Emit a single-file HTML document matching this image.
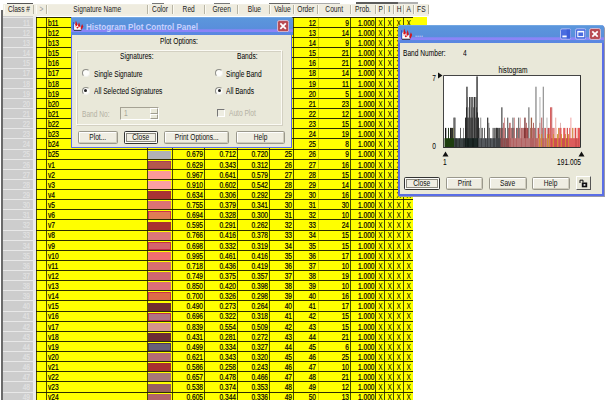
<!DOCTYPE html>
<html><head><meta charset="utf-8"><title>Signature Editor</title>
<style>
html,body{margin:0;padding:0;background:#fff;}
body{width:609px;height:405px;position:relative;overflow:hidden;font-family:"Liberation Sans",sans-serif;font-size:7.5px;color:#000;}
.a{position:absolute;}
.t{position:absolute;white-space:nowrap;line-height:10px;height:10px;font-size:8.4px;transform:scaleX(0.79);transform-origin:0 50%;}
.t.r{transform-origin:100% 50%;}
.t.c{transform-origin:50% 50%;}
.s{display:inline-block;font-size:8.4px;transform:scaleX(0.79);transform-origin:50% 50%;white-space:nowrap;}
.k{-webkit-text-stroke:0.2px currentColor;}
.r{text-align:right;}
.c{text-align:center;}
.hd{position:absolute;top:5px;height:9px;background:#efecdf;border-right:1px solid #b8b5a5;border-left:1px solid #fbfaf3;line-height:9px;text-align:center;white-space:nowrap;font-size:7.5px;color:#222;}
.hl{position:absolute;height:1px;background:#2c2c00;}
.vl{position:absolute;width:1px;background:rgba(30,30,0,0.8);}
.btn{position:absolute;background:#efede2;border:1px solid #9a988c;border-radius:1.5px;box-shadow:inset -1px -1px 0 #cfccbd, inset 1px 1px 0 #fff;text-align:center;white-space:nowrap;font-size:7.5px;color:#111;box-sizing:border-box;}
.win{position:absolute;background:#e9e8d9;box-sizing:border-box;}
.tb{position:absolute;left:0;right:0;top:0;}
.radio{position:absolute;width:6px;height:6px;border-radius:50%;background:#fdfdfb;border:1px solid #f0f0ea;border-top-color:#8e8e88;border-left-color:#8e8e88;box-sizing:content-box;}
.dis{color:#b4b1a3;}
</style></head><body>

<div class="a" style="left:7px;top:3px;width:26px;height:1px;background:#555"></div>
<div class="a" style="left:152px;top:3px;width:12px;height:1px;background:#777"></div>
<div class="a" style="left:214px;top:3px;width:16px;height:1px;background:#777"></div>
<div class="a" style="left:269px;top:3px;width:25px;height:1px;background:#666"></div>
<div class="a" style="left:290px;top:2.6px;width:50px;height:1px;background:#aaa"></div>
<div class="a" style="left:356px;top:2.2px;width:42px;height:1.6px;background:#5c5c5c"></div>
<div class="a" style="left:398px;top:2.4px;width:20px;height:1.2px;background:#b0b0b0"></div>
<div class="a" style="left:3px;top:4px;width:426px;height:12px;background:#f1efe4"></div>
<div class="hd" style="left:4px;width:28px;"><span class="s">Class #</span></div>
<div class="hd" style="left:36px;width:9px;color:#999;"><span class="s">&gt;</span></div>
<div class="hd" style="left:47px;width:99px;"><span class="s">Signature Name</span></div>
<div class="hd" style="left:148px;width:23px;"><span class="s">Color</span></div>
<div class="hd" style="left:173px;width:30px;"><span class="s">Red</span></div>
<div class="hd" style="left:205px;width:31px;"><span class="s">Green</span></div>
<div class="hd" style="left:238px;width:30px;"><span class="s">Blue</span></div>
<div class="hd" style="left:270px;width:22px;"><span class="s">Value</span></div>
<div class="hd" style="left:294px;width:22px;"><span class="s">Order</span></div>
<div class="hd" style="left:318px;width:31px;"><span class="s">Count</span></div>
<div class="hd" style="left:351px;width:23px;"><span class="s">Prob.</span></div>
<div class="hd" style="left:376px;width:7px;"><span class="s">P</span></div>
<div class="hd" style="left:385px;width:7px;"><span class="s">I</span></div>
<div class="hd" style="left:394px;width:8px;"><span class="s">H</span></div>
<div class="hd" style="left:404px;width:8px;"><span class="s">A</span></div>
<div class="hd" style="left:414px;width:13px;"><span class="s">FS</span></div>
<div class="a" style="left:0.6px;top:10px;width:2px;height:390px;background:#6a6a6a"></div>
<div class="a" style="left:3px;top:16px;width:30px;height:384px;background:#cdcdcd"></div>
<div class="a" style="left:33px;top:16px;width:4px;height:384px;background:#ebebeb"></div>
<div class="a" style="left:36.3px;top:17.45px;width:376.7px;height:382.55px;background:#ffff00"></div>
<div class="a" style="left:413px;top:17.45px;width:13.6px;height:7.4px;background:#ffff00"></div>
<div class="a" style="left:3px;top:16.95px;width:30px;height:1px;background:#e8e8e8"></div>
<div class="hl" style="left:36.3px;top:16.95px;width:376.7px"></div>
<div class="t r k" style="left:3px;width:27px;top:17.85px;color:#e2e2e2">11</div>
<div class="t k" style="left:47.8px;top:17.85px">b11</div>
<div class="t r k" style="left:294px;width:22px;top:17.85px">12</div>
<div class="t r k" style="left:318px;width:31px;top:17.85px">9</div>
<div class="t r k" style="left:351px;width:23.5px;top:17.85px">1.000</div>
<div class="t c" style="left:376px;width:9px;top:17.85px">X</div>
<div class="t c" style="left:385px;width:9.399999999999977px;top:17.85px">X</div>
<div class="t c" style="left:394.4px;width:9.200000000000045px;top:17.85px">X</div>
<div class="t c" style="left:403.6px;width:9.399999999999977px;top:17.85px">X</div>
<div class="a" style="left:3px;top:27.07px;width:30px;height:1px;background:#e8e8e8"></div>
<div class="hl" style="left:36.3px;top:27.07px;width:376.7px"></div>
<div class="t r k" style="left:3px;width:27px;top:27.97px;color:#e2e2e2">12</div>
<div class="t k" style="left:47.8px;top:27.97px">b12</div>
<div class="t r k" style="left:294px;width:22px;top:27.97px">13</div>
<div class="t r k" style="left:318px;width:31px;top:27.97px">14</div>
<div class="t r k" style="left:351px;width:23.5px;top:27.97px">1.000</div>
<div class="t c" style="left:376px;width:9px;top:27.97px">X</div>
<div class="t c" style="left:385px;width:9.399999999999977px;top:27.97px">X</div>
<div class="t c" style="left:394.4px;width:9.200000000000045px;top:27.97px">X</div>
<div class="t c" style="left:403.6px;width:9.399999999999977px;top:27.97px">X</div>
<div class="a" style="left:3px;top:37.20px;width:30px;height:1px;background:#e8e8e8"></div>
<div class="hl" style="left:36.3px;top:37.20px;width:376.7px"></div>
<div class="t r k" style="left:3px;width:27px;top:38.10px;color:#e2e2e2">13</div>
<div class="t k" style="left:47.8px;top:38.10px">b13</div>
<div class="t r k" style="left:294px;width:22px;top:38.10px">14</div>
<div class="t r k" style="left:318px;width:31px;top:38.10px">9</div>
<div class="t r k" style="left:351px;width:23.5px;top:38.10px">1.000</div>
<div class="t c" style="left:376px;width:9px;top:38.10px">X</div>
<div class="t c" style="left:385px;width:9.399999999999977px;top:38.10px">X</div>
<div class="t c" style="left:394.4px;width:9.200000000000045px;top:38.10px">X</div>
<div class="t c" style="left:403.6px;width:9.399999999999977px;top:38.10px">X</div>
<div class="a" style="left:3px;top:47.33px;width:30px;height:1px;background:#e8e8e8"></div>
<div class="hl" style="left:36.3px;top:47.33px;width:376.7px"></div>
<div class="t r k" style="left:3px;width:27px;top:48.23px;color:#e2e2e2">14</div>
<div class="t k" style="left:47.8px;top:48.23px">b15</div>
<div class="t r k" style="left:294px;width:22px;top:48.23px">15</div>
<div class="t r k" style="left:318px;width:31px;top:48.23px">21</div>
<div class="t r k" style="left:351px;width:23.5px;top:48.23px">1.000</div>
<div class="t c" style="left:376px;width:9px;top:48.23px">X</div>
<div class="t c" style="left:385px;width:9.399999999999977px;top:48.23px">X</div>
<div class="t c" style="left:394.4px;width:9.200000000000045px;top:48.23px">X</div>
<div class="t c" style="left:403.6px;width:9.399999999999977px;top:48.23px">X</div>
<div class="a" style="left:3px;top:57.45px;width:30px;height:1px;background:#e8e8e8"></div>
<div class="hl" style="left:36.3px;top:57.45px;width:376.7px"></div>
<div class="t r k" style="left:3px;width:27px;top:58.35px;color:#e2e2e2">15</div>
<div class="t k" style="left:47.8px;top:58.35px">b16</div>
<div class="t r k" style="left:294px;width:22px;top:58.35px">16</div>
<div class="t r k" style="left:318px;width:31px;top:58.35px">21</div>
<div class="t r k" style="left:351px;width:23.5px;top:58.35px">1.000</div>
<div class="t c" style="left:376px;width:9px;top:58.35px">X</div>
<div class="t c" style="left:385px;width:9.399999999999977px;top:58.35px">X</div>
<div class="t c" style="left:394.4px;width:9.200000000000045px;top:58.35px">X</div>
<div class="t c" style="left:403.6px;width:9.399999999999977px;top:58.35px">X</div>
<div class="a" style="left:3px;top:67.58px;width:30px;height:1px;background:#e8e8e8"></div>
<div class="hl" style="left:36.3px;top:67.58px;width:376.7px"></div>
<div class="t r k" style="left:3px;width:27px;top:68.48px;color:#e2e2e2">17</div>
<div class="t k" style="left:47.8px;top:68.48px">b17</div>
<div class="t r k" style="left:294px;width:22px;top:68.48px">18</div>
<div class="t r k" style="left:318px;width:31px;top:68.48px">14</div>
<div class="t r k" style="left:351px;width:23.5px;top:68.48px">1.000</div>
<div class="t c" style="left:376px;width:9px;top:68.48px">X</div>
<div class="t c" style="left:385px;width:9.399999999999977px;top:68.48px">X</div>
<div class="t c" style="left:394.4px;width:9.200000000000045px;top:68.48px">X</div>
<div class="t c" style="left:403.6px;width:9.399999999999977px;top:68.48px">X</div>
<div class="a" style="left:3px;top:77.70px;width:30px;height:1px;background:#e8e8e8"></div>
<div class="hl" style="left:36.3px;top:77.70px;width:376.7px"></div>
<div class="t r k" style="left:3px;width:27px;top:78.60px;color:#e2e2e2">18</div>
<div class="t k" style="left:47.8px;top:78.60px">b18</div>
<div class="t r k" style="left:294px;width:22px;top:78.60px">19</div>
<div class="t r k" style="left:318px;width:31px;top:78.60px">11</div>
<div class="t r k" style="left:351px;width:23.5px;top:78.60px">1.000</div>
<div class="t c" style="left:376px;width:9px;top:78.60px">X</div>
<div class="t c" style="left:385px;width:9.399999999999977px;top:78.60px">X</div>
<div class="t c" style="left:394.4px;width:9.200000000000045px;top:78.60px">X</div>
<div class="t c" style="left:403.6px;width:9.399999999999977px;top:78.60px">X</div>
<div class="a" style="left:3px;top:87.83px;width:30px;height:1px;background:#e8e8e8"></div>
<div class="hl" style="left:36.3px;top:87.83px;width:376.7px"></div>
<div class="t r k" style="left:3px;width:27px;top:88.73px;color:#e2e2e2">19</div>
<div class="t k" style="left:47.8px;top:88.73px">b19</div>
<div class="t r k" style="left:294px;width:22px;top:88.73px">20</div>
<div class="t r k" style="left:318px;width:31px;top:88.73px">5</div>
<div class="t r k" style="left:351px;width:23.5px;top:88.73px">1.000</div>
<div class="t c" style="left:376px;width:9px;top:88.73px">X</div>
<div class="t c" style="left:385px;width:9.399999999999977px;top:88.73px">X</div>
<div class="t c" style="left:394.4px;width:9.200000000000045px;top:88.73px">X</div>
<div class="t c" style="left:403.6px;width:9.399999999999977px;top:88.73px">X</div>
<div class="a" style="left:3px;top:97.95px;width:30px;height:1px;background:#e8e8e8"></div>
<div class="hl" style="left:36.3px;top:97.95px;width:376.7px"></div>
<div class="t r k" style="left:3px;width:27px;top:98.85px;color:#e2e2e2">20</div>
<div class="t k" style="left:47.8px;top:98.85px">b20</div>
<div class="t r k" style="left:294px;width:22px;top:98.85px">21</div>
<div class="t r k" style="left:318px;width:31px;top:98.85px">23</div>
<div class="t r k" style="left:351px;width:23.5px;top:98.85px">1.000</div>
<div class="t c" style="left:376px;width:9px;top:98.85px">X</div>
<div class="t c" style="left:385px;width:9.399999999999977px;top:98.85px">X</div>
<div class="t c" style="left:394.4px;width:9.200000000000045px;top:98.85px">X</div>
<div class="t c" style="left:403.6px;width:9.399999999999977px;top:98.85px">X</div>
<div class="a" style="left:3px;top:108.08px;width:30px;height:1px;background:#e8e8e8"></div>
<div class="hl" style="left:36.3px;top:108.08px;width:376.7px"></div>
<div class="t r k" style="left:3px;width:27px;top:108.98px;color:#e2e2e2">21</div>
<div class="t k" style="left:47.8px;top:108.98px">b21</div>
<div class="t r k" style="left:294px;width:22px;top:108.98px">22</div>
<div class="t r k" style="left:318px;width:31px;top:108.98px">12</div>
<div class="t r k" style="left:351px;width:23.5px;top:108.98px">1.000</div>
<div class="t c" style="left:376px;width:9px;top:108.98px">X</div>
<div class="t c" style="left:385px;width:9.399999999999977px;top:108.98px">X</div>
<div class="t c" style="left:394.4px;width:9.200000000000045px;top:108.98px">X</div>
<div class="t c" style="left:403.6px;width:9.399999999999977px;top:108.98px">X</div>
<div class="a" style="left:3px;top:118.20px;width:30px;height:1px;background:#e8e8e8"></div>
<div class="hl" style="left:36.3px;top:118.20px;width:376.7px"></div>
<div class="t r k" style="left:3px;width:27px;top:119.10px;color:#e2e2e2">22</div>
<div class="t k" style="left:47.8px;top:119.10px">b22</div>
<div class="t r k" style="left:294px;width:22px;top:119.10px">23</div>
<div class="t r k" style="left:318px;width:31px;top:119.10px">15</div>
<div class="t r k" style="left:351px;width:23.5px;top:119.10px">1.000</div>
<div class="t c" style="left:376px;width:9px;top:119.10px">X</div>
<div class="t c" style="left:385px;width:9.399999999999977px;top:119.10px">X</div>
<div class="t c" style="left:394.4px;width:9.200000000000045px;top:119.10px">X</div>
<div class="t c" style="left:403.6px;width:9.399999999999977px;top:119.10px">X</div>
<div class="a" style="left:3px;top:128.32px;width:30px;height:1px;background:#e8e8e8"></div>
<div class="hl" style="left:36.3px;top:128.32px;width:376.7px"></div>
<div class="t r k" style="left:3px;width:27px;top:129.22px;color:#e2e2e2">23</div>
<div class="t k" style="left:47.8px;top:129.22px">b23</div>
<div class="t r k" style="left:294px;width:22px;top:129.22px">24</div>
<div class="t r k" style="left:318px;width:31px;top:129.22px">19</div>
<div class="t r k" style="left:351px;width:23.5px;top:129.22px">1.000</div>
<div class="t c" style="left:376px;width:9px;top:129.22px">X</div>
<div class="t c" style="left:385px;width:9.399999999999977px;top:129.22px">X</div>
<div class="t c" style="left:394.4px;width:9.200000000000045px;top:129.22px">X</div>
<div class="t c" style="left:403.6px;width:9.399999999999977px;top:129.22px">X</div>
<div class="a" style="left:3px;top:138.45px;width:30px;height:1px;background:#e8e8e8"></div>
<div class="hl" style="left:36.3px;top:138.45px;width:376.7px"></div>
<div class="t r k" style="left:3px;width:27px;top:139.35px;color:#e2e2e2">24</div>
<div class="t k" style="left:47.8px;top:139.35px">b24</div>
<div class="t r k" style="left:294px;width:22px;top:139.35px">25</div>
<div class="t r k" style="left:318px;width:31px;top:139.35px">8</div>
<div class="t r k" style="left:351px;width:23.5px;top:139.35px">1.000</div>
<div class="t c" style="left:376px;width:9px;top:139.35px">X</div>
<div class="t c" style="left:385px;width:9.399999999999977px;top:139.35px">X</div>
<div class="t c" style="left:394.4px;width:9.200000000000045px;top:139.35px">X</div>
<div class="t c" style="left:403.6px;width:9.399999999999977px;top:139.35px">X</div>
<div class="a" style="left:3px;top:148.57px;width:30px;height:1px;background:#e8e8e8"></div>
<div class="hl" style="left:36.3px;top:148.57px;width:376.7px"></div>
<div class="t r k" style="left:3px;width:27px;top:149.47px;color:#e2e2e2">25</div>
<div class="t k" style="left:47.8px;top:149.47px">b25</div>
<div class="a" style="left:148.3px;top:150.67px;width:22.7px;height:8.20px;background:#b2b2b6;"></div>
<div class="t r k" style="left:173px;width:30px;top:149.47px">0.679</div>
<div class="t r k" style="left:205px;width:31px;top:149.47px">0.712</div>
<div class="t r k" style="left:238px;width:30px;top:149.47px">0.720</div>
<div class="t r k" style="left:270px;width:22px;top:149.47px">25</div>
<div class="t r k" style="left:294px;width:22px;top:149.47px">26</div>
<div class="t r k" style="left:318px;width:31px;top:149.47px">9</div>
<div class="t r k" style="left:351px;width:23.5px;top:149.47px">1.000</div>
<div class="t c" style="left:376px;width:9px;top:149.47px">X</div>
<div class="t c" style="left:385px;width:9.399999999999977px;top:149.47px">X</div>
<div class="t c" style="left:394.4px;width:9.200000000000045px;top:149.47px">X</div>
<div class="t c" style="left:403.6px;width:9.399999999999977px;top:149.47px">X</div>
<div class="a" style="left:3px;top:158.70px;width:30px;height:1px;background:#e8e8e8"></div>
<div class="hl" style="left:36.3px;top:158.70px;width:376.7px"></div>
<div class="t r k" style="left:3px;width:27px;top:159.60px;color:#e2e2e2">26</div>
<div class="t k" style="left:47.8px;top:159.60px">v1</div>
<div class="a" style="left:148.3px;top:160.80px;width:22.7px;height:8.20px;background:#b4584c;box-shadow:inset 0 0 0 1px #a84058;"></div>
<div class="t r k" style="left:173px;width:30px;top:159.60px">0.629</div>
<div class="t r k" style="left:205px;width:31px;top:159.60px">0.343</div>
<div class="t r k" style="left:238px;width:30px;top:159.60px">0.312</div>
<div class="t r k" style="left:270px;width:22px;top:159.60px">26</div>
<div class="t r k" style="left:294px;width:22px;top:159.60px">27</div>
<div class="t r k" style="left:318px;width:31px;top:159.60px">16</div>
<div class="t r k" style="left:351px;width:23.5px;top:159.60px">1.000</div>
<div class="t c" style="left:376px;width:9px;top:159.60px">X</div>
<div class="t c" style="left:385px;width:9.399999999999977px;top:159.60px">X</div>
<div class="t c" style="left:394.4px;width:9.200000000000045px;top:159.60px">X</div>
<div class="t c" style="left:403.6px;width:9.399999999999977px;top:159.60px">X</div>
<div class="a" style="left:3px;top:168.82px;width:30px;height:1px;background:#e8e8e8"></div>
<div class="hl" style="left:36.3px;top:168.82px;width:376.7px"></div>
<div class="t r k" style="left:3px;width:27px;top:169.72px;color:#e2e2e2">27</div>
<div class="t k" style="left:47.8px;top:169.72px">v2</div>
<div class="a" style="left:148.3px;top:170.92px;width:22.7px;height:8.20px;background:#fc9a98;"></div>
<div class="t r k" style="left:173px;width:30px;top:169.72px">0.967</div>
<div class="t r k" style="left:205px;width:31px;top:169.72px">0.641</div>
<div class="t r k" style="left:238px;width:30px;top:169.72px">0.579</div>
<div class="t r k" style="left:270px;width:22px;top:169.72px">27</div>
<div class="t r k" style="left:294px;width:22px;top:169.72px">28</div>
<div class="t r k" style="left:318px;width:31px;top:169.72px">15</div>
<div class="t r k" style="left:351px;width:23.5px;top:169.72px">1.000</div>
<div class="t c" style="left:376px;width:9px;top:169.72px">X</div>
<div class="t c" style="left:385px;width:9.399999999999977px;top:169.72px">X</div>
<div class="t c" style="left:394.4px;width:9.200000000000045px;top:169.72px">X</div>
<div class="t c" style="left:403.6px;width:9.399999999999977px;top:169.72px">X</div>
<div class="a" style="left:3px;top:178.95px;width:30px;height:1px;background:#e8e8e8"></div>
<div class="hl" style="left:36.3px;top:178.95px;width:376.7px"></div>
<div class="t r k" style="left:3px;width:27px;top:179.85px;color:#e2e2e2">28</div>
<div class="t k" style="left:47.8px;top:179.85px">v3</div>
<div class="a" style="left:148.3px;top:181.05px;width:22.7px;height:8.20px;background:#fca0a0;"></div>
<div class="t r k" style="left:173px;width:30px;top:179.85px">0.910</div>
<div class="t r k" style="left:205px;width:31px;top:179.85px">0.602</div>
<div class="t r k" style="left:238px;width:30px;top:179.85px">0.542</div>
<div class="t r k" style="left:270px;width:22px;top:179.85px">28</div>
<div class="t r k" style="left:294px;width:22px;top:179.85px">29</div>
<div class="t r k" style="left:318px;width:31px;top:179.85px">14</div>
<div class="t r k" style="left:351px;width:23.5px;top:179.85px">1.000</div>
<div class="t c" style="left:376px;width:9px;top:179.85px">X</div>
<div class="t c" style="left:385px;width:9.399999999999977px;top:179.85px">X</div>
<div class="t c" style="left:394.4px;width:9.200000000000045px;top:179.85px">X</div>
<div class="t c" style="left:403.6px;width:9.399999999999977px;top:179.85px">X</div>
<div class="a" style="left:3px;top:189.07px;width:30px;height:1px;background:#e8e8e8"></div>
<div class="hl" style="left:36.3px;top:189.07px;width:376.7px"></div>
<div class="t r k" style="left:3px;width:27px;top:189.97px;color:#e2e2e2">29</div>
<div class="t k" style="left:47.8px;top:189.97px">v4</div>
<div class="a" style="left:148.3px;top:191.17px;width:22.7px;height:8.20px;background:#a83434;"></div>
<div class="t r k" style="left:173px;width:30px;top:189.97px">0.634</div>
<div class="t r k" style="left:205px;width:31px;top:189.97px">0.306</div>
<div class="t r k" style="left:238px;width:30px;top:189.97px">0.292</div>
<div class="t r k" style="left:270px;width:22px;top:189.97px">29</div>
<div class="t r k" style="left:294px;width:22px;top:189.97px">30</div>
<div class="t r k" style="left:318px;width:31px;top:189.97px">16</div>
<div class="t r k" style="left:351px;width:23.5px;top:189.97px">1.000</div>
<div class="t c" style="left:376px;width:9px;top:189.97px">X</div>
<div class="t c" style="left:385px;width:9.399999999999977px;top:189.97px">X</div>
<div class="t c" style="left:394.4px;width:9.200000000000045px;top:189.97px">X</div>
<div class="t c" style="left:403.6px;width:9.399999999999977px;top:189.97px">X</div>
<div class="a" style="left:3px;top:199.20px;width:30px;height:1px;background:#e8e8e8"></div>
<div class="hl" style="left:36.3px;top:199.20px;width:376.7px"></div>
<div class="t r k" style="left:3px;width:27px;top:200.10px;color:#e2e2e2">30</div>
<div class="t k" style="left:47.8px;top:200.10px">v5</div>
<div class="a" style="left:148.3px;top:201.30px;width:22.7px;height:8.20px;background:#dc7474;"></div>
<div class="t r k" style="left:173px;width:30px;top:200.10px">0.755</div>
<div class="t r k" style="left:205px;width:31px;top:200.10px">0.379</div>
<div class="t r k" style="left:238px;width:30px;top:200.10px">0.341</div>
<div class="t r k" style="left:270px;width:22px;top:200.10px">30</div>
<div class="t r k" style="left:294px;width:22px;top:200.10px">31</div>
<div class="t r k" style="left:318px;width:31px;top:200.10px">30</div>
<div class="t r k" style="left:351px;width:23.5px;top:200.10px">1.000</div>
<div class="t c" style="left:376px;width:9px;top:200.10px">X</div>
<div class="t c" style="left:385px;width:9.399999999999977px;top:200.10px">X</div>
<div class="t c" style="left:394.4px;width:9.200000000000045px;top:200.10px">X</div>
<div class="t c" style="left:403.6px;width:9.399999999999977px;top:200.10px">X</div>
<div class="a" style="left:3px;top:209.32px;width:30px;height:1px;background:#e8e8e8"></div>
<div class="hl" style="left:36.3px;top:209.32px;width:376.7px"></div>
<div class="t r k" style="left:3px;width:27px;top:210.22px;color:#e2e2e2">31</div>
<div class="t k" style="left:47.8px;top:210.22px">v6</div>
<div class="a" style="left:148.3px;top:211.42px;width:22.7px;height:8.20px;background:#e07c54;box-shadow:inset 0 0 0 1px #cc3050;"></div>
<div class="t r k" style="left:173px;width:30px;top:210.22px">0.694</div>
<div class="t r k" style="left:205px;width:31px;top:210.22px">0.328</div>
<div class="t r k" style="left:238px;width:30px;top:210.22px">0.300</div>
<div class="t r k" style="left:270px;width:22px;top:210.22px">31</div>
<div class="t r k" style="left:294px;width:22px;top:210.22px">32</div>
<div class="t r k" style="left:318px;width:31px;top:210.22px">10</div>
<div class="t r k" style="left:351px;width:23.5px;top:210.22px">1.000</div>
<div class="t c" style="left:376px;width:9px;top:210.22px">X</div>
<div class="t c" style="left:385px;width:9.399999999999977px;top:210.22px">X</div>
<div class="t c" style="left:394.4px;width:9.200000000000045px;top:210.22px">X</div>
<div class="t c" style="left:403.6px;width:9.399999999999977px;top:210.22px">X</div>
<div class="a" style="left:3px;top:219.45px;width:30px;height:1px;background:#e8e8e8"></div>
<div class="hl" style="left:36.3px;top:219.45px;width:376.7px"></div>
<div class="t r k" style="left:3px;width:27px;top:220.35px;color:#e2e2e2">32</div>
<div class="t k" style="left:47.8px;top:220.35px">v7</div>
<div class="a" style="left:148.3px;top:221.55px;width:22.7px;height:8.20px;background:#a83030;"></div>
<div class="t r k" style="left:173px;width:30px;top:220.35px">0.595</div>
<div class="t r k" style="left:205px;width:31px;top:220.35px">0.291</div>
<div class="t r k" style="left:238px;width:30px;top:220.35px">0.262</div>
<div class="t r k" style="left:270px;width:22px;top:220.35px">32</div>
<div class="t r k" style="left:294px;width:22px;top:220.35px">33</div>
<div class="t r k" style="left:318px;width:31px;top:220.35px">24</div>
<div class="t r k" style="left:351px;width:23.5px;top:220.35px">1.000</div>
<div class="t c" style="left:376px;width:9px;top:220.35px">X</div>
<div class="t c" style="left:385px;width:9.399999999999977px;top:220.35px">X</div>
<div class="t c" style="left:394.4px;width:9.200000000000045px;top:220.35px">X</div>
<div class="t c" style="left:403.6px;width:9.399999999999977px;top:220.35px">X</div>
<div class="a" style="left:3px;top:229.57px;width:30px;height:1px;background:#e8e8e8"></div>
<div class="hl" style="left:36.3px;top:229.57px;width:376.7px"></div>
<div class="t r k" style="left:3px;width:27px;top:230.47px;color:#e2e2e2">33</div>
<div class="t k" style="left:47.8px;top:230.47px">v8</div>
<div class="a" style="left:148.3px;top:231.67px;width:22.7px;height:8.20px;background:#dc7878;"></div>
<div class="t r k" style="left:173px;width:30px;top:230.47px">0.766</div>
<div class="t r k" style="left:205px;width:31px;top:230.47px">0.416</div>
<div class="t r k" style="left:238px;width:30px;top:230.47px">0.378</div>
<div class="t r k" style="left:270px;width:22px;top:230.47px">33</div>
<div class="t r k" style="left:294px;width:22px;top:230.47px">34</div>
<div class="t r k" style="left:318px;width:31px;top:230.47px">15</div>
<div class="t r k" style="left:351px;width:23.5px;top:230.47px">1.000</div>
<div class="t c" style="left:376px;width:9px;top:230.47px">X</div>
<div class="t c" style="left:385px;width:9.399999999999977px;top:230.47px">X</div>
<div class="t c" style="left:394.4px;width:9.200000000000045px;top:230.47px">X</div>
<div class="t c" style="left:403.6px;width:9.399999999999977px;top:230.47px">X</div>
<div class="a" style="left:3px;top:239.70px;width:30px;height:1px;background:#e8e8e8"></div>
<div class="hl" style="left:36.3px;top:239.70px;width:376.7px"></div>
<div class="t r k" style="left:3px;width:27px;top:240.60px;color:#e2e2e2">34</div>
<div class="t k" style="left:47.8px;top:240.60px">v9</div>
<div class="a" style="left:148.3px;top:241.80px;width:22.7px;height:8.20px;background:#d4646c;box-shadow:inset 0 0 0 1px #c83048;"></div>
<div class="t r k" style="left:173px;width:30px;top:240.60px">0.698</div>
<div class="t r k" style="left:205px;width:31px;top:240.60px">0.332</div>
<div class="t r k" style="left:238px;width:30px;top:240.60px">0.319</div>
<div class="t r k" style="left:270px;width:22px;top:240.60px">34</div>
<div class="t r k" style="left:294px;width:22px;top:240.60px">35</div>
<div class="t r k" style="left:318px;width:31px;top:240.60px">15</div>
<div class="t r k" style="left:351px;width:23.5px;top:240.60px">1.000</div>
<div class="t c" style="left:376px;width:9px;top:240.60px">X</div>
<div class="t c" style="left:385px;width:9.399999999999977px;top:240.60px">X</div>
<div class="t c" style="left:394.4px;width:9.200000000000045px;top:240.60px">X</div>
<div class="t c" style="left:403.6px;width:9.399999999999977px;top:240.60px">X</div>
<div class="a" style="left:3px;top:249.82px;width:30px;height:1px;background:#e8e8e8"></div>
<div class="hl" style="left:36.3px;top:249.82px;width:376.7px"></div>
<div class="t r k" style="left:3px;width:27px;top:250.72px;color:#e2e2e2">35</div>
<div class="t k" style="left:47.8px;top:250.72px">v10</div>
<div class="a" style="left:148.3px;top:251.92px;width:22.7px;height:8.20px;background:#f07070;"></div>
<div class="t r k" style="left:173px;width:30px;top:250.72px">0.995</div>
<div class="t r k" style="left:205px;width:31px;top:250.72px">0.461</div>
<div class="t r k" style="left:238px;width:30px;top:250.72px">0.416</div>
<div class="t r k" style="left:270px;width:22px;top:250.72px">35</div>
<div class="t r k" style="left:294px;width:22px;top:250.72px">36</div>
<div class="t r k" style="left:318px;width:31px;top:250.72px">17</div>
<div class="t r k" style="left:351px;width:23.5px;top:250.72px">1.000</div>
<div class="t c" style="left:376px;width:9px;top:250.72px">X</div>
<div class="t c" style="left:385px;width:9.399999999999977px;top:250.72px">X</div>
<div class="t c" style="left:394.4px;width:9.200000000000045px;top:250.72px">X</div>
<div class="t c" style="left:403.6px;width:9.399999999999977px;top:250.72px">X</div>
<div class="a" style="left:3px;top:259.95px;width:30px;height:1px;background:#e8e8e8"></div>
<div class="hl" style="left:36.3px;top:259.95px;width:376.7px"></div>
<div class="t r k" style="left:3px;width:27px;top:260.85px;color:#e2e2e2">36</div>
<div class="t k" style="left:47.8px;top:260.85px">v11</div>
<div class="a" style="left:148.3px;top:262.05px;width:22.7px;height:8.20px;background:#d87070;"></div>
<div class="t r k" style="left:173px;width:30px;top:260.85px">0.718</div>
<div class="t r k" style="left:205px;width:31px;top:260.85px">0.436</div>
<div class="t r k" style="left:238px;width:30px;top:260.85px">0.419</div>
<div class="t r k" style="left:270px;width:22px;top:260.85px">36</div>
<div class="t r k" style="left:294px;width:22px;top:260.85px">37</div>
<div class="t r k" style="left:318px;width:31px;top:260.85px">10</div>
<div class="t r k" style="left:351px;width:23.5px;top:260.85px">1.000</div>
<div class="t c" style="left:376px;width:9px;top:260.85px">X</div>
<div class="t c" style="left:385px;width:9.399999999999977px;top:260.85px">X</div>
<div class="t c" style="left:394.4px;width:9.200000000000045px;top:260.85px">X</div>
<div class="t c" style="left:403.6px;width:9.399999999999977px;top:260.85px">X</div>
<div class="a" style="left:3px;top:270.07px;width:30px;height:1px;background:#e8e8e8"></div>
<div class="hl" style="left:36.3px;top:270.07px;width:376.7px"></div>
<div class="t r k" style="left:3px;width:27px;top:270.97px;color:#e2e2e2">37</div>
<div class="t k" style="left:47.8px;top:270.97px">v12</div>
<div class="a" style="left:148.3px;top:272.18px;width:22.7px;height:8.20px;background:#d06870;"></div>
<div class="t r k" style="left:173px;width:30px;top:270.97px">0.749</div>
<div class="t r k" style="left:205px;width:31px;top:270.97px">0.375</div>
<div class="t r k" style="left:238px;width:30px;top:270.97px">0.357</div>
<div class="t r k" style="left:270px;width:22px;top:270.97px">37</div>
<div class="t r k" style="left:294px;width:22px;top:270.97px">38</div>
<div class="t r k" style="left:318px;width:31px;top:270.97px">19</div>
<div class="t r k" style="left:351px;width:23.5px;top:270.97px">1.000</div>
<div class="t c" style="left:376px;width:9px;top:270.97px">X</div>
<div class="t c" style="left:385px;width:9.399999999999977px;top:270.97px">X</div>
<div class="t c" style="left:394.4px;width:9.200000000000045px;top:270.97px">X</div>
<div class="t c" style="left:403.6px;width:9.399999999999977px;top:270.97px">X</div>
<div class="a" style="left:3px;top:280.20px;width:30px;height:1px;background:#e8e8e8"></div>
<div class="hl" style="left:36.3px;top:280.20px;width:376.7px"></div>
<div class="t r k" style="left:3px;width:27px;top:281.10px;color:#e2e2e2">38</div>
<div class="t k" style="left:47.8px;top:281.10px">v13</div>
<div class="a" style="left:148.3px;top:282.30px;width:22.7px;height:8.20px;background:#dc7078;"></div>
<div class="t r k" style="left:173px;width:30px;top:281.10px">0.850</div>
<div class="t r k" style="left:205px;width:31px;top:281.10px">0.420</div>
<div class="t r k" style="left:238px;width:30px;top:281.10px">0.398</div>
<div class="t r k" style="left:270px;width:22px;top:281.10px">38</div>
<div class="t r k" style="left:294px;width:22px;top:281.10px">39</div>
<div class="t r k" style="left:318px;width:31px;top:281.10px">10</div>
<div class="t r k" style="left:351px;width:23.5px;top:281.10px">1.000</div>
<div class="t c" style="left:376px;width:9px;top:281.10px">X</div>
<div class="t c" style="left:385px;width:9.399999999999977px;top:281.10px">X</div>
<div class="t c" style="left:394.4px;width:9.200000000000045px;top:281.10px">X</div>
<div class="t c" style="left:403.6px;width:9.399999999999977px;top:281.10px">X</div>
<div class="a" style="left:3px;top:290.32px;width:30px;height:1px;background:#e8e8e8"></div>
<div class="hl" style="left:36.3px;top:290.32px;width:376.7px"></div>
<div class="t r k" style="left:3px;width:27px;top:291.22px;color:#e2e2e2">39</div>
<div class="t k" style="left:47.8px;top:291.22px">v14</div>
<div class="a" style="left:148.3px;top:292.43px;width:22.7px;height:8.20px;background:#dc6c48;box-shadow:inset 0 0 0 1px #cc3050;"></div>
<div class="t r k" style="left:173px;width:30px;top:291.22px">0.700</div>
<div class="t r k" style="left:205px;width:31px;top:291.22px">0.326</div>
<div class="t r k" style="left:238px;width:30px;top:291.22px">0.298</div>
<div class="t r k" style="left:270px;width:22px;top:291.22px">39</div>
<div class="t r k" style="left:294px;width:22px;top:291.22px">40</div>
<div class="t r k" style="left:318px;width:31px;top:291.22px">16</div>
<div class="t r k" style="left:351px;width:23.5px;top:291.22px">1.000</div>
<div class="t c" style="left:376px;width:9px;top:291.22px">X</div>
<div class="t c" style="left:385px;width:9.399999999999977px;top:291.22px">X</div>
<div class="t c" style="left:394.4px;width:9.200000000000045px;top:291.22px">X</div>
<div class="t c" style="left:403.6px;width:9.399999999999977px;top:291.22px">X</div>
<div class="a" style="left:3px;top:300.45px;width:30px;height:1px;background:#e8e8e8"></div>
<div class="hl" style="left:36.3px;top:300.45px;width:376.7px"></div>
<div class="t r k" style="left:3px;width:27px;top:301.35px;color:#e2e2e2">40</div>
<div class="t k" style="left:47.8px;top:301.35px">v15</div>
<div class="a" style="left:148.3px;top:302.55px;width:22.7px;height:8.20px;background:#702c30;"></div>
<div class="t r k" style="left:173px;width:30px;top:301.35px">0.490</div>
<div class="t r k" style="left:205px;width:31px;top:301.35px">0.273</div>
<div class="t r k" style="left:238px;width:30px;top:301.35px">0.264</div>
<div class="t r k" style="left:270px;width:22px;top:301.35px">40</div>
<div class="t r k" style="left:294px;width:22px;top:301.35px">41</div>
<div class="t r k" style="left:318px;width:31px;top:301.35px">17</div>
<div class="t r k" style="left:351px;width:23.5px;top:301.35px">1.000</div>
<div class="t c" style="left:376px;width:9px;top:301.35px">X</div>
<div class="t c" style="left:385px;width:9.399999999999977px;top:301.35px">X</div>
<div class="t c" style="left:394.4px;width:9.200000000000045px;top:301.35px">X</div>
<div class="t c" style="left:403.6px;width:9.399999999999977px;top:301.35px">X</div>
<div class="a" style="left:3px;top:310.57px;width:30px;height:1px;background:#e8e8e8"></div>
<div class="hl" style="left:36.3px;top:310.57px;width:376.7px"></div>
<div class="t r k" style="left:3px;width:27px;top:311.47px;color:#e2e2e2">41</div>
<div class="t k" style="left:47.8px;top:311.47px">v16</div>
<div class="a" style="left:148.3px;top:312.68px;width:22.7px;height:8.20px;background:#b07484;box-shadow:inset 0 0 0 1px #b83050;"></div>
<div class="t r k" style="left:173px;width:30px;top:311.47px">0.696</div>
<div class="t r k" style="left:205px;width:31px;top:311.47px">0.322</div>
<div class="t r k" style="left:238px;width:30px;top:311.47px">0.318</div>
<div class="t r k" style="left:270px;width:22px;top:311.47px">41</div>
<div class="t r k" style="left:294px;width:22px;top:311.47px">42</div>
<div class="t r k" style="left:318px;width:31px;top:311.47px">15</div>
<div class="t r k" style="left:351px;width:23.5px;top:311.47px">1.000</div>
<div class="t c" style="left:376px;width:9px;top:311.47px">X</div>
<div class="t c" style="left:385px;width:9.399999999999977px;top:311.47px">X</div>
<div class="t c" style="left:394.4px;width:9.200000000000045px;top:311.47px">X</div>
<div class="t c" style="left:403.6px;width:9.399999999999977px;top:311.47px">X</div>
<div class="a" style="left:3px;top:320.70px;width:30px;height:1px;background:#e8e8e8"></div>
<div class="hl" style="left:36.3px;top:320.70px;width:376.7px"></div>
<div class="t r k" style="left:3px;width:27px;top:321.60px;color:#e2e2e2">42</div>
<div class="t k" style="left:47.8px;top:321.60px">v17</div>
<div class="a" style="left:148.3px;top:322.80px;width:22.7px;height:8.20px;background:#d4948c;"></div>
<div class="t r k" style="left:173px;width:30px;top:321.60px">0.839</div>
<div class="t r k" style="left:205px;width:31px;top:321.60px">0.554</div>
<div class="t r k" style="left:238px;width:30px;top:321.60px">0.509</div>
<div class="t r k" style="left:270px;width:22px;top:321.60px">42</div>
<div class="t r k" style="left:294px;width:22px;top:321.60px">43</div>
<div class="t r k" style="left:318px;width:31px;top:321.60px">15</div>
<div class="t r k" style="left:351px;width:23.5px;top:321.60px">1.000</div>
<div class="t c" style="left:376px;width:9px;top:321.60px">X</div>
<div class="t c" style="left:385px;width:9.399999999999977px;top:321.60px">X</div>
<div class="t c" style="left:394.4px;width:9.200000000000045px;top:321.60px">X</div>
<div class="t c" style="left:403.6px;width:9.399999999999977px;top:321.60px">X</div>
<div class="a" style="left:3px;top:330.82px;width:30px;height:1px;background:#e8e8e8"></div>
<div class="hl" style="left:36.3px;top:330.82px;width:376.7px"></div>
<div class="t r k" style="left:3px;width:27px;top:331.72px;color:#e2e2e2">43</div>
<div class="t k" style="left:47.8px;top:331.72px">v18</div>
<div class="a" style="left:148.3px;top:332.93px;width:22.7px;height:8.20px;background:#6c2c34;"></div>
<div class="t r k" style="left:173px;width:30px;top:331.72px">0.431</div>
<div class="t r k" style="left:205px;width:31px;top:331.72px">0.281</div>
<div class="t r k" style="left:238px;width:30px;top:331.72px">0.272</div>
<div class="t r k" style="left:270px;width:22px;top:331.72px">43</div>
<div class="t r k" style="left:294px;width:22px;top:331.72px">44</div>
<div class="t r k" style="left:318px;width:31px;top:331.72px">21</div>
<div class="t r k" style="left:351px;width:23.5px;top:331.72px">1.000</div>
<div class="t c" style="left:376px;width:9px;top:331.72px">X</div>
<div class="t c" style="left:385px;width:9.399999999999977px;top:331.72px">X</div>
<div class="t c" style="left:394.4px;width:9.200000000000045px;top:331.72px">X</div>
<div class="t c" style="left:403.6px;width:9.399999999999977px;top:331.72px">X</div>
<div class="a" style="left:3px;top:340.95px;width:30px;height:1px;background:#e8e8e8"></div>
<div class="hl" style="left:36.3px;top:340.95px;width:376.7px"></div>
<div class="t r k" style="left:3px;width:27px;top:341.85px;color:#e2e2e2">44</div>
<div class="t k" style="left:47.8px;top:341.85px">v19</div>
<div class="a" style="left:148.3px;top:343.05px;width:22.7px;height:8.20px;background:#686078;box-shadow:inset 0 0 0 1px #503858;"></div>
<div class="t r k" style="left:173px;width:30px;top:341.85px">0.499</div>
<div class="t r k" style="left:205px;width:31px;top:341.85px">0.334</div>
<div class="t r k" style="left:238px;width:30px;top:341.85px">0.327</div>
<div class="t r k" style="left:270px;width:22px;top:341.85px">44</div>
<div class="t r k" style="left:294px;width:22px;top:341.85px">45</div>
<div class="t r k" style="left:318px;width:31px;top:341.85px">6</div>
<div class="t r k" style="left:351px;width:23.5px;top:341.85px">1.000</div>
<div class="t c" style="left:376px;width:9px;top:341.85px">X</div>
<div class="t c" style="left:385px;width:9.399999999999977px;top:341.85px">X</div>
<div class="t c" style="left:394.4px;width:9.200000000000045px;top:341.85px">X</div>
<div class="t c" style="left:403.6px;width:9.399999999999977px;top:341.85px">X</div>
<div class="a" style="left:3px;top:351.07px;width:30px;height:1px;background:#e8e8e8"></div>
<div class="hl" style="left:36.3px;top:351.07px;width:376.7px"></div>
<div class="t r k" style="left:3px;width:27px;top:351.97px;color:#e2e2e2">45</div>
<div class="t k" style="left:47.8px;top:351.97px">v20</div>
<div class="a" style="left:148.3px;top:353.18px;width:22.7px;height:8.20px;background:#b46c74;"></div>
<div class="t r k" style="left:173px;width:30px;top:351.97px">0.621</div>
<div class="t r k" style="left:205px;width:31px;top:351.97px">0.343</div>
<div class="t r k" style="left:238px;width:30px;top:351.97px">0.320</div>
<div class="t r k" style="left:270px;width:22px;top:351.97px">45</div>
<div class="t r k" style="left:294px;width:22px;top:351.97px">46</div>
<div class="t r k" style="left:318px;width:31px;top:351.97px">25</div>
<div class="t r k" style="left:351px;width:23.5px;top:351.97px">1.000</div>
<div class="t c" style="left:376px;width:9px;top:351.97px">X</div>
<div class="t c" style="left:385px;width:9.399999999999977px;top:351.97px">X</div>
<div class="t c" style="left:394.4px;width:9.200000000000045px;top:351.97px">X</div>
<div class="t c" style="left:403.6px;width:9.399999999999977px;top:351.97px">X</div>
<div class="a" style="left:3px;top:361.20px;width:30px;height:1px;background:#e8e8e8"></div>
<div class="hl" style="left:36.3px;top:361.20px;width:376.7px"></div>
<div class="t r k" style="left:3px;width:27px;top:362.10px;color:#e2e2e2">46</div>
<div class="t k" style="left:47.8px;top:362.10px">v21</div>
<div class="a" style="left:148.3px;top:363.30px;width:22.7px;height:8.20px;background:#a83030;"></div>
<div class="t r k" style="left:173px;width:30px;top:362.10px">0.586</div>
<div class="t r k" style="left:205px;width:31px;top:362.10px">0.258</div>
<div class="t r k" style="left:238px;width:30px;top:362.10px">0.243</div>
<div class="t r k" style="left:270px;width:22px;top:362.10px">46</div>
<div class="t r k" style="left:294px;width:22px;top:362.10px">47</div>
<div class="t r k" style="left:318px;width:31px;top:362.10px">10</div>
<div class="t r k" style="left:351px;width:23.5px;top:362.10px">1.000</div>
<div class="t c" style="left:376px;width:9px;top:362.10px">X</div>
<div class="t c" style="left:385px;width:9.399999999999977px;top:362.10px">X</div>
<div class="t c" style="left:394.4px;width:9.200000000000045px;top:362.10px">X</div>
<div class="t c" style="left:403.6px;width:9.399999999999977px;top:362.10px">X</div>
<div class="a" style="left:3px;top:371.32px;width:30px;height:1px;background:#e8e8e8"></div>
<div class="hl" style="left:36.3px;top:371.32px;width:376.7px"></div>
<div class="t r k" style="left:3px;width:27px;top:372.22px;color:#e2e2e2">47</div>
<div class="t k" style="left:47.8px;top:372.22px">v22</div>
<div class="a" style="left:148.3px;top:373.43px;width:22.7px;height:8.20px;background:#a87878;"></div>
<div class="t r k" style="left:173px;width:30px;top:372.22px">0.657</div>
<div class="t r k" style="left:205px;width:31px;top:372.22px">0.478</div>
<div class="t r k" style="left:238px;width:30px;top:372.22px">0.466</div>
<div class="t r k" style="left:270px;width:22px;top:372.22px">47</div>
<div class="t r k" style="left:294px;width:22px;top:372.22px">48</div>
<div class="t r k" style="left:318px;width:31px;top:372.22px">21</div>
<div class="t r k" style="left:351px;width:23.5px;top:372.22px">1.000</div>
<div class="t c" style="left:376px;width:9px;top:372.22px">X</div>
<div class="t c" style="left:385px;width:9.399999999999977px;top:372.22px">X</div>
<div class="t c" style="left:394.4px;width:9.200000000000045px;top:372.22px">X</div>
<div class="t c" style="left:403.6px;width:9.399999999999977px;top:372.22px">X</div>
<div class="a" style="left:3px;top:381.45px;width:30px;height:1px;background:#e8e8e8"></div>
<div class="hl" style="left:36.3px;top:381.45px;width:376.7px"></div>
<div class="t r k" style="left:3px;width:27px;top:382.35px;color:#e2e2e2">48</div>
<div class="t k" style="left:47.8px;top:382.35px">v23</div>
<div class="a" style="left:148.3px;top:383.55px;width:22.7px;height:8.20px;background:#986060;"></div>
<div class="t r k" style="left:173px;width:30px;top:382.35px">0.538</div>
<div class="t r k" style="left:205px;width:31px;top:382.35px">0.374</div>
<div class="t r k" style="left:238px;width:30px;top:382.35px">0.353</div>
<div class="t r k" style="left:270px;width:22px;top:382.35px">48</div>
<div class="t r k" style="left:294px;width:22px;top:382.35px">49</div>
<div class="t r k" style="left:318px;width:31px;top:382.35px">12</div>
<div class="t r k" style="left:351px;width:23.5px;top:382.35px">1.000</div>
<div class="t c" style="left:376px;width:9px;top:382.35px">X</div>
<div class="t c" style="left:385px;width:9.399999999999977px;top:382.35px">X</div>
<div class="t c" style="left:394.4px;width:9.200000000000045px;top:382.35px">X</div>
<div class="t c" style="left:403.6px;width:9.399999999999977px;top:382.35px">X</div>
<div class="a" style="left:3px;top:391.57px;width:30px;height:1px;background:#e8e8e8"></div>
<div class="hl" style="left:36.3px;top:391.57px;width:376.7px"></div>
<div class="t r k" style="left:3px;width:27px;top:392.47px;color:#e2e2e2">49</div>
<div class="t k" style="left:47.8px;top:392.47px">v24</div>
<div class="a" style="left:148.3px;top:393.68px;width:22.7px;height:6.32px;background:#b06468;"></div>
<div class="t r k" style="left:173px;width:30px;top:392.47px">0.605</div>
<div class="t r k" style="left:205px;width:31px;top:392.47px">0.344</div>
<div class="t r k" style="left:238px;width:30px;top:392.47px">0.336</div>
<div class="t r k" style="left:270px;width:22px;top:392.47px">49</div>
<div class="t r k" style="left:294px;width:22px;top:392.47px">50</div>
<div class="t r k" style="left:318px;width:31px;top:392.47px">13</div>
<div class="t r k" style="left:351px;width:23.5px;top:392.47px">1.000</div>
<div class="t c" style="left:376px;width:9px;top:392.47px">X</div>
<div class="t c" style="left:385px;width:9.399999999999977px;top:392.47px">X</div>
<div class="t c" style="left:394.4px;width:9.200000000000045px;top:392.47px">X</div>
<div class="t c" style="left:403.6px;width:9.399999999999977px;top:392.47px">X</div>
<div class="vl" style="left:36.3px;top:17.45px;height:382.55px"></div>
<div class="vl" style="left:45.7px;top:17.45px;height:382.55px"></div>
<div class="vl" style="left:147.3px;top:17.45px;height:382.55px"></div>
<div class="vl" style="left:171.8px;top:17.45px;height:382.55px"></div>
<div class="vl" style="left:204.0px;top:17.45px;height:382.55px"></div>
<div class="vl" style="left:237.0px;top:17.45px;height:382.55px"></div>
<div class="vl" style="left:268.9px;top:17.45px;height:382.55px"></div>
<div class="vl" style="left:293.3px;top:17.45px;height:382.55px"></div>
<div class="vl" style="left:349.7px;top:17.45px;height:382.55px"></div>
<div class="vl" style="left:374.9px;top:17.45px;height:382.55px"></div>
<div class="vl" style="left:384.1px;top:17.45px;height:382.55px"></div>
<div class="vl" style="left:393.4px;top:17.45px;height:382.55px"></div>
<div class="vl" style="left:402.8px;top:17.45px;height:382.55px"></div>
<div class="vl" style="left:317.5px;top:17.45px;height:382.55px;background:rgba(120,120,0,0.35)"></div>
<div class="win" style="left:71px;top:16.6px;width:221px;height:131.3px;border:1.5px solid #5a6ee6;border-top:none;">
<div class="tb" style="height:18.2px;background:linear-gradient(#7fb0e6 0%,#5b96dc 8%,#598edb 68%,#8a84f6 70%,#8c84f8 84%,#5c88e2 86%,#5a86e0 100%);border-radius:2px 2px 0 0;left:-1.5px;right:-1.5px"></div>
</div>
<svg class="a" style="left:73px;top:20px" width="11" height="11" viewBox="0 0 11 11"><path d="M1 10 L1 4.6 L2.6 3.2 L7.8 7.2 L8 10 Z" fill="#fff"/><path d="M2 5.2 L2.9 0.4 L4.5 4.4 L3.9 6.2 Z" fill="#d4141c"/><path d="M4.9 5.9 L6 1.9 L7.2 5.4 L6.3 7.4 Z" fill="#d4141c"/><path d="M7.5 8.2 L9.1 4 L10.2 6.4 L8.8 9.8 Z" fill="#d4141c"/><path d="M2.4 5 L3.4 6.6 L2.2 7.4 Z M5.2 6.4 L6.2 7.8 L5 8 Z" fill="#f0a0a0"/><circle cx="4.4" cy="7.6" r="0.9" fill="#d4141c"/><path d="M0.6 2 L0.6 10" stroke="#2c4cc8" stroke-width="0.9"/><path d="M0.8 10.3 L8.4 10.3" stroke="#222" stroke-width="0.9"/></svg>
<div class="t" style="left:86px;top:21px;font-size:9.6px;font-weight:bold;color:#c8d1ff;line-height:11px;height:11px;transform:scaleX(0.84)" id="t1">Histogram Plot Control Panel</div>
<svg class="a" style="left:277px;top:19.8px" width="12.2" height="12.2" viewBox="0 0 11 11"><rect x="0.5" y="0.5" width="10" height="10" rx="1.5" fill="#b84a52" stroke="#dcc8dc" stroke-width="0.8"/><path d="M3 3 L8 8 M8 3 L3 8" stroke="#fff" stroke-width="1.6"/></svg>
<div class="t c" style="left:150px;width:58px;top:35.5px">Plot Options:</div>
<div class="a" style="left:76px;top:50px;width:206px;height:75px;border:1px solid #fbfaf4;box-shadow:inset 1px 1px 0 #d3d0c2, 1px 1px 0 #d3d0c2;box-sizing:border-box"></div>
<div class="t" style="left:120px;top:51px">Signatures:</div>
<div class="t" style="left:236.5px;top:51px">Bands:</div>
<div class="radio" style="left:81.6px;top:69px"></div>
<div class="t" style="left:93.5px;top:68.5px">Single Signature</div>
<div class="radio" style="left:81.6px;top:86.7px"></div><div class="a" style="left:84.1px;top:89.2px;width:3px;height:3px;border-radius:50%;background:#222"></div>
<div class="t" style="left:93.5px;top:86.2px">All Selected Signatures</div>
<div class="radio" style="left:215px;top:69.3px"></div>
<div class="t" style="left:226px;top:68.8px">Single Band</div>
<div class="radio" style="left:215px;top:86.8px"></div><div class="a" style="left:217.5px;top:89.3px;width:3px;height:3px;border-radius:50%;background:#222"></div>
<div class="t" style="left:226px;top:86.3px">All Bands</div>
<div class="t dis" style="left:82px;top:109px">Band No:</div>
<div class="a" style="left:120px;top:107px;width:39px;height:13px;box-sizing:border-box;border:1px solid #a5a294;border-right-color:#fff;border-bottom-color:#fff;background:#e9e8d9"></div>
<div class="t dis" style="left:124px;top:107.5px;color:#a9a698">1</div>
<div class="a" style="left:150px;top:108px;width:8px;height:5.5px;box-sizing:border-box;border:1px solid #fff;border-right-color:#a09d90;border-bottom-color:#a09d90;background:#e9e8d9"></div>
<div class="a" style="left:150px;top:113.5px;width:8px;height:5.5px;box-sizing:border-box;border:1px solid #fff;border-right-color:#a09d90;border-bottom-color:#a09d90;background:#e9e8d9"></div>
<div class="a" style="left:217px;top:109px;width:8px;height:8px;box-sizing:border-box;border:1px solid #fff;border-top-color:#777;border-left-color:#777;background:#eeede2"></div>
<div class="t dis" style="left:228.5px;top:108px">Auto Plot</div>
<div class="btn" style="left:78px;top:131px;width:40px;height:12.5px;line-height:10.5px;"><span class="s">Plot...</span></div>
<div class="btn" style="left:124px;top:131px;width:33.5px;height:12.5px;line-height:10.5px;border-color:#333;box-shadow:inset 0 0 0 1px #fdfdfa, inset 0 0 0 2px #8c8a80;"><span class="s">Close</span></div>
<div class="btn" style="left:164px;top:131px;width:65px;height:12.5px;line-height:10.5px;"><span class="s">Print Options...</span></div>
<div class="btn" style="left:236px;top:131px;width:48.5px;height:12.5px;line-height:10.5px;"><span class="s">Help</span></div>
<div class="win" style="left:398.2px;top:25.4px;width:205.6px;height:170.4px;border:2px solid #5a6ee6;border-top:none;border-radius:3px 3px 0 0;box-shadow:1px 1px 0 #9a9aa8">
<div class="tb" style="height:17.4px;background:linear-gradient(#7fb0e6 0%,#5b96dc 8%,#598edb 68%,#8a84f6 70%,#8c84f8 84%,#5c88e2 86%,#5a86e0 100%);border-radius:3px 3px 0 0;left:-2px;right:-2px"></div>
</div>
<svg class="a" style="left:401px;top:27.8px" width="12" height="12" viewBox="0 0 11 11"><path d="M1 10 L1 4.6 L2.6 3.2 L7.8 7.2 L8 10 Z" fill="#fff"/><path d="M2 5.2 L2.9 0.4 L4.5 4.4 L3.9 6.2 Z" fill="#d4141c"/><path d="M4.9 5.9 L6 1.9 L7.2 5.4 L6.3 7.4 Z" fill="#d4141c"/><path d="M7.5 8.2 L9.1 4 L10.2 6.4 L8.8 9.8 Z" fill="#d4141c"/><path d="M2.4 5 L3.4 6.6 L2.2 7.4 Z M5.2 6.4 L6.2 7.8 L5 8 Z" fill="#f0a0a0"/><circle cx="4.4" cy="7.6" r="0.9" fill="#d4141c"/><path d="M0.6 2 L0.6 10" stroke="#2c4cc8" stroke-width="0.9"/><path d="M0.8 10.3 L8.4 10.3" stroke="#222" stroke-width="0.9"/></svg>
<div class="t" style="left:415px;top:29px;font-size:9px;font-weight:bold;color:#b8c4ff;line-height:11px">....</div>
<svg class="a" style="left:559.7px;top:27.6px" width="11.3" height="12" viewBox="0 0 11 11"><rect x="0.5" y="0.5" width="10" height="10" rx="1.5" fill="#4a6ce0" stroke="#c4ccf8" stroke-width="0.8"/><path d="M6.5 1 L10 1 L10 10 L6.5 10 Z" fill="#3858d4" opacity="0.7"/><rect x="2.3" y="7" width="4.2" height="1.7" fill="#fff"/></svg>
<svg class="a" style="left:574.6px;top:27.6px" width="11.5" height="12" viewBox="0 0 11 11"><rect x="0.5" y="0.5" width="10" height="10" rx="1.5" fill="#4a6ce0" stroke="#c4ccf8" stroke-width="0.8"/><rect x="2.7" y="3" width="5.6" height="5" fill="none" stroke="#fff" stroke-width="1"/><rect x="2.7" y="2.6" width="5.6" height="1.4" fill="#fff"/></svg>
<svg class="a" style="left:589px;top:27.6px" width="12" height="12" viewBox="0 0 11 11"><rect x="0.5" y="0.5" width="10" height="10" rx="1.5" fill="#b84a52" stroke="#dcc8dc" stroke-width="0.8"/><path d="M3 3 L8 8 M8 3 L3 8" stroke="#fff" stroke-width="1.6"/></svg>
<div class="t" style="left:402.5px;top:48px">Band Number:</div>
<div class="t" style="left:462.5px;top:48px">4</div>
<div class="t c" style="left:490px;width:46px;top:64.5px">histogram</div>
<div class="t r" style="left:426px;width:10px;top:73px">7</div>
<div class="t r" style="left:426px;width:10px;top:141px">0</div>
<div class="t" style="left:442.5px;top:156.5px">1</div>
<div class="t r" style="left:540px;width:41px;top:156.5px">191.005</div>
<svg class="a" style="left:443px;top:75px" width="138" height="73" viewBox="0 0 138 73"><rect x="0" y="0" width="138" height="73" fill="#fff"/><rect x="5.0" y="52.9" width="1" height="19.1" fill="#14280c" opacity="0.92"/><rect x="7.0" y="52.9" width="1" height="19.1" fill="#222" opacity="0.92"/><rect x="8.0" y="52.9" width="1" height="19.1" fill="#d8d890" opacity="0.92"/><rect x="9.0" y="52.9" width="1" height="19.1" fill="#222" opacity="0.92"/><rect x="10.0" y="52.9" width="1" height="19.1" fill="#d8d890" opacity="0.92"/><rect x="11.0" y="52.9" width="1" height="19.1" fill="#888" opacity="0.92"/><rect x="17.0" y="52.9" width="1" height="19.1" fill="#555" opacity="0.92"/><rect x="20.0" y="52.9" width="1" height="19.1" fill="#888" opacity="0.92"/><rect x="22.0" y="52.9" width="1" height="19.1" fill="#444" opacity="0.92"/><rect x="24.0" y="52.9" width="1" height="19.1" fill="#222" opacity="0.92"/><rect x="25.0" y="52.9" width="1" height="19.1" fill="#444" opacity="0.92"/><rect x="26.0" y="52.9" width="1" height="19.1" fill="#222" opacity="0.92"/><rect x="27.0" y="52.9" width="1" height="19.1" fill="#555" opacity="0.92"/><rect x="28.0" y="52.9" width="1" height="19.1" fill="#777" opacity="0.92"/><rect x="32.0" y="52.9" width="1" height="19.1" fill="#222" opacity="0.92"/><rect x="35.0" y="52.9" width="1" height="19.1" fill="#333" opacity="0.92"/><rect x="36.0" y="52.9" width="1" height="19.1" fill="#777" opacity="0.92"/><rect x="37.0" y="52.9" width="1" height="19.1" fill="#555" opacity="0.92"/><rect x="38.0" y="52.9" width="1" height="19.1" fill="#777" opacity="0.92"/><rect x="39.0" y="52.9" width="1" height="19.1" fill="#666" opacity="0.92"/><rect x="41.0" y="52.9" width="1" height="19.1" fill="#555" opacity="0.92"/><rect x="45.0" y="52.9" width="1" height="19.1" fill="#555" opacity="0.92"/><rect x="46.0" y="52.9" width="1" height="19.1" fill="#666" opacity="0.92"/><rect x="51.0" y="52.9" width="1" height="19.1" fill="#666" opacity="0.92"/><rect x="52.0" y="52.9" width="1" height="19.1" fill="#777" opacity="0.92"/><rect x="53.0" y="52.9" width="1" height="19.1" fill="#222" opacity="0.92"/><rect x="54.0" y="52.9" width="1" height="19.1" fill="#333" opacity="0.92"/><rect x="55.0" y="52.9" width="1" height="19.1" fill="#555" opacity="0.92"/><rect x="56.0" y="52.9" width="1" height="19.1" fill="#444" opacity="0.92"/><rect x="57.0" y="52.9" width="1" height="19.1" fill="#a46868" opacity="0.92"/><rect x="58.0" y="52.9" width="1" height="19.1" fill="#a85050" opacity="0.92"/><rect x="59.0" y="52.9" width="1" height="19.1" fill="#b06060" opacity="0.92"/><rect x="61.0" y="52.9" width="1" height="19.1" fill="#a46868" opacity="0.92"/><rect x="62.0" y="52.9" width="1" height="19.1" fill="#666" opacity="0.92"/><rect x="65.0" y="52.9" width="1" height="19.1" fill="#a85050" opacity="0.92"/><rect x="66.0" y="52.9" width="1" height="19.1" fill="#a85050" opacity="0.92"/><rect x="67.0" y="52.9" width="1" height="19.1" fill="#a85050" opacity="0.92"/><rect x="68.0" y="52.9" width="1" height="19.1" fill="#a46868" opacity="0.92"/><rect x="69.0" y="52.9" width="1" height="19.1" fill="#803030" opacity="0.92"/><rect x="70.0" y="52.9" width="1" height="19.1" fill="#a85050" opacity="0.92"/><rect x="71.0" y="52.9" width="1" height="19.1" fill="#803030" opacity="0.92"/><rect x="73.0" y="52.9" width="1" height="19.1" fill="#666" opacity="0.92"/><rect x="74.0" y="52.9" width="1" height="19.1" fill="#b06060" opacity="0.92"/><rect x="75.0" y="52.9" width="1" height="19.1" fill="#666" opacity="0.92"/><rect x="76.0" y="52.9" width="1" height="19.1" fill="#a46868" opacity="0.92"/><rect x="77.0" y="52.9" width="1" height="19.1" fill="#a46868" opacity="0.92"/><rect x="78.0" y="52.9" width="1" height="19.1" fill="#b06060" opacity="0.92"/><rect x="79.0" y="52.9" width="1" height="19.1" fill="#b87070" opacity="0.92"/><rect x="80.0" y="52.9" width="1" height="19.1" fill="#b87070" opacity="0.92"/><rect x="81.0" y="52.9" width="1" height="19.1" fill="#983838" opacity="0.92"/><rect x="82.0" y="52.9" width="1" height="19.1" fill="#a85050" opacity="0.92"/><rect x="83.0" y="52.9" width="1" height="19.1" fill="#983838" opacity="0.92"/><rect x="84.0" y="52.9" width="1" height="19.1" fill="#983838" opacity="0.92"/><rect x="85.0" y="52.9" width="1" height="19.1" fill="#b06060" opacity="0.92"/><rect x="87.0" y="52.9" width="1" height="19.1" fill="#b06060" opacity="0.92"/><rect x="88.0" y="52.9" width="1" height="19.1" fill="#a46868" opacity="0.92"/><rect x="89.0" y="52.9" width="1" height="19.1" fill="#b87070" opacity="0.92"/><rect x="91.0" y="52.9" width="1" height="19.1" fill="#b06060" opacity="0.92"/><rect x="92.0" y="52.9" width="1" height="19.1" fill="#983838" opacity="0.92"/><rect x="94.0" y="52.9" width="1" height="19.1" fill="#e8a0a0" opacity="0.92"/><rect x="95.0" y="52.9" width="1" height="19.1" fill="#c04040" opacity="0.92"/><rect x="96.0" y="52.9" width="1" height="19.1" fill="#d05050" opacity="0.92"/><rect x="97.0" y="52.9" width="1" height="19.1" fill="#d88080" opacity="0.92"/><rect x="98.0" y="52.9" width="1" height="19.1" fill="#d88080" opacity="0.92"/><rect x="99.0" y="52.9" width="1" height="19.1" fill="#d05050" opacity="0.92"/><rect x="100.0" y="52.9" width="1" height="19.1" fill="#c89040" opacity="0.92"/><rect x="101.0" y="52.9" width="1" height="19.1" fill="#d88080" opacity="0.92"/><rect x="102.0" y="52.9" width="1" height="19.1" fill="#d05050" opacity="0.92"/><rect x="104.0" y="52.9" width="1" height="19.1" fill="#d05050" opacity="0.92"/><rect x="105.0" y="52.9" width="1" height="19.1" fill="#c04040" opacity="0.92"/><rect x="106.0" y="52.9" width="1" height="19.1" fill="#e07878" opacity="0.92"/><rect x="107.0" y="52.9" width="1" height="19.1" fill="#e07878" opacity="0.92"/><rect x="108.0" y="52.9" width="1" height="19.1" fill="#c89040" opacity="0.92"/><rect x="109.0" y="52.9" width="1" height="19.1" fill="#e07878" opacity="0.92"/><rect x="110.0" y="52.9" width="1" height="19.1" fill="#e07878" opacity="0.92"/><rect x="111.0" y="52.9" width="1" height="19.1" fill="#e8a0a0" opacity="0.92"/><rect x="112.0" y="52.9" width="1" height="19.1" fill="#f0c0b8" opacity="0.92"/><rect x="113.0" y="52.9" width="1" height="19.1" fill="#f4d0c8" opacity="0.92"/><rect x="115.0" y="52.9" width="1" height="19.1" fill="#d09040" opacity="0.92"/><rect x="116.0" y="52.9" width="1" height="19.1" fill="#e87070" opacity="0.92"/><rect x="118.0" y="52.9" width="1" height="19.1" fill="#f4d0c8" opacity="0.92"/><rect x="120.0" y="52.9" width="1" height="19.1" fill="#e87070" opacity="0.92"/><rect x="121.0" y="52.9" width="1" height="19.1" fill="#e05050" opacity="0.92"/><rect x="122.0" y="52.9" width="1" height="19.1" fill="#f0c0b8" opacity="0.92"/><rect x="123.0" y="52.9" width="1" height="19.1" fill="#f4d0c8" opacity="0.92"/><rect x="124.0" y="52.9" width="1" height="19.1" fill="#d04848" opacity="0.92"/><rect x="126.0" y="52.9" width="1" height="19.1" fill="#e87070" opacity="0.92"/><rect x="127.0" y="52.9" width="1" height="19.1" fill="#e05050" opacity="0.92"/><rect x="129.0" y="52.9" width="1" height="19.1" fill="#d09040" opacity="0.92"/><rect x="130.0" y="52.9" width="1" height="19.1" fill="#f0c0b8" opacity="0.92"/><rect x="131.0" y="52.9" width="1" height="19.1" fill="#f0c0b8" opacity="0.92"/><rect x="132.0" y="52.9" width="1" height="19.1" fill="#f0b0a8" opacity="0.92"/><rect x="134.0" y="52.9" width="1" height="19.1" fill="#f0b0a8" opacity="0.92"/><rect x="135.0" y="52.9" width="1" height="19.1" fill="#f4d0c8" opacity="0.92"/><rect x="136.0" y="52.9" width="1" height="19.1" fill="#e05050" opacity="0.92"/><rect x="60.0" y="47.8" width="1" height="24.2" fill="#b05858" opacity="0.8"/><rect x="61.0" y="42.6" width="1" height="29.4" fill="#c88080" opacity="0.8"/><rect x="66.0" y="47.8" width="1" height="24.2" fill="#b05858" opacity="0.8"/><rect x="67.0" y="47.8" width="1" height="24.2" fill="#c88080" opacity="0.8"/><rect x="71.0" y="42.6" width="1" height="29.4" fill="#c88080" opacity="0.8"/><rect x="77.0" y="42.6" width="1" height="29.4" fill="#d8a0a0" opacity="0.8"/><rect x="83.0" y="47.8" width="1" height="24.2" fill="#b05858" opacity="0.8"/><rect x="88.0" y="47.8" width="1" height="24.2" fill="#d8a0a0" opacity="0.8"/><rect x="90.0" y="47.8" width="1" height="24.2" fill="#a04040" opacity="0.8"/><rect x="96.0" y="47.8" width="1" height="24.2" fill="#a04040" opacity="0.8"/><rect x="97.0" y="47.8" width="1" height="24.2" fill="#d8a0a0" opacity="0.8"/><rect x="117.0" y="47.8" width="1" height="24.2" fill="#d8a0a0" opacity="0.8"/><rect x="22.0" y="42.6" width="1" height="29.4" fill="#222" opacity="0.95"/><rect x="23.0" y="32.3" width="1" height="39.7" fill="#181818" opacity="0.95"/><rect x="24.0" y="42.6" width="1" height="29.4" fill="#2a2a2a" opacity="0.95"/><rect x="25.0" y="42.6" width="1" height="29.4" fill="#222" opacity="0.95"/><rect x="26.0" y="27.1" width="1" height="44.9" fill="#2a2a2a" opacity="0.95"/><rect x="27.0" y="42.6" width="1" height="29.4" fill="#2a2a2a" opacity="0.95"/><rect x="28.0" y="42.6" width="1" height="29.4" fill="#444" opacity="0.95"/><rect x="29.0" y="42.6" width="1" height="29.4" fill="#181818" opacity="0.95"/><rect x="30.0" y="32.3" width="1" height="39.7" fill="#444" opacity="0.95"/><rect x="31.0" y="42.6" width="1" height="29.4" fill="#222" opacity="0.95"/><rect x="32.0" y="42.6" width="1" height="29.4" fill="#444" opacity="0.95"/><rect x="33.0" y="32.3" width="1" height="39.7" fill="#444" opacity="0.95"/><rect x="34.0" y="37.4" width="1" height="34.6" fill="#444" opacity="0.95"/><rect x="35.0" y="42.6" width="1" height="29.4" fill="#2a2a2a" opacity="0.95"/><rect x="24.0" y="22.0" width="1" height="50.0" fill="#777" opacity="0.5"/><rect x="25.0" y="32.3" width="1" height="39.7" fill="#777" opacity="0.5"/><rect x="26.0" y="22.0" width="1" height="50.0" fill="#777" opacity="0.5"/><rect x="27.0" y="22.0" width="1" height="50.0" fill="#777" opacity="0.5"/><rect x="28.0" y="32.3" width="1" height="39.7" fill="#777" opacity="0.5"/><rect x="29.0" y="22.0" width="1" height="50.0" fill="#777" opacity="0.5"/><rect x="30.0" y="22.0" width="1" height="50.0" fill="#777" opacity="0.5"/><rect x="31.0" y="22.0" width="1" height="50.0" fill="#777" opacity="0.5"/><rect x="32.0" y="22.0" width="1" height="50.0" fill="#777" opacity="0.5"/><rect x="33.0" y="22.0" width="1" height="50.0" fill="#777" opacity="0.5"/><rect x="10.5" y="42.6" width="1.3" height="29.4" fill="#222" opacity="1"/><rect x="11.6" y="42.6" width="1.3" height="29.4" fill="#999" opacity="1"/><rect x="2.0" y="52.9" width="1.3" height="19.1" fill="#111" opacity="1"/><rect x="7.5" y="52.9" width="1.3" height="19.1" fill="#111" opacity="1"/><rect x="23.3" y="11.7" width="1.3" height="60.3" fill="#333" opacity="1"/><rect x="26.0" y="22.0" width="1.3" height="50.0" fill="#444" opacity="1"/><rect x="28.3" y="22.0" width="1.3" height="50.0" fill="#333" opacity="1"/><rect x="31.0" y="22.0" width="1.3" height="50.0" fill="#333" opacity="1"/><rect x="33.4" y="1.4" width="1.3" height="70.6" fill="#222" opacity="1"/><rect x="37.0" y="42.6" width="1.3" height="29.4" fill="#aaa" opacity="1"/><rect x="44.0" y="42.6" width="1.3" height="29.4" fill="#444" opacity="1"/><rect x="45.0" y="47.8" width="1.3" height="24.2" fill="#888" opacity="1"/><rect x="49.5" y="52.9" width="1.3" height="19.1" fill="#666" opacity="1"/><rect x="53.0" y="52.9" width="1.3" height="19.1" fill="#333" opacity="1"/><rect x="58.2" y="32.3" width="1.3" height="39.7" fill="#555" opacity="1"/><rect x="64.0" y="42.6" width="1.3" height="29.4" fill="#777" opacity="1"/><rect x="69.3" y="42.6" width="1.3" height="29.4" fill="#777" opacity="1"/><rect x="75.0" y="42.6" width="1.3" height="29.4" fill="#777" opacity="1"/><rect x="81.3" y="42.6" width="1.3" height="29.4" fill="#7a3030" opacity="1"/><rect x="85.2" y="32.3" width="1.3" height="39.7" fill="#808080" opacity="1"/><rect x="87.8" y="42.6" width="1.3" height="29.4" fill="#a06048" opacity="1"/><rect x="92.3" y="11.7" width="1.3" height="60.3" fill="#8c8c8c" opacity="1"/><rect x="96.3" y="22.0" width="1.3" height="50.0" fill="#c4c4c4" opacity="1"/><rect x="99.7" y="11.7" width="1.3" height="60.3" fill="#9a9a9a" opacity="1"/><rect x="98.0" y="42.6" width="1.3" height="29.4" fill="#c88080" opacity="1"/><rect x="103.3" y="42.6" width="1.3" height="29.4" fill="#c8c8c8" opacity="1"/><rect x="107.0" y="32.3" width="1.3" height="39.7" fill="#d86060" opacity="1"/><rect x="108.0" y="32.3" width="1.3" height="39.7" fill="#d07878" opacity="1"/><rect x="112.0" y="42.6" width="1.3" height="29.4" fill="#f0c0b8" opacity="1"/><rect x="117.0" y="52.9" width="1.3" height="19.1" fill="#e06060" opacity="1"/><rect x="127.2" y="42.6" width="1.3" height="29.4" fill="#f4b8b8" opacity="1"/><rect x="132.0" y="52.9" width="1.3" height="19.1" fill="#e04848" opacity="1"/><rect x="135.0" y="52.9" width="1.3" height="19.1" fill="#e85858" opacity="1"/><rect x="1.5" y="63.2" width="9.5" height="8.8" fill="#1c3c0c" opacity="1"/><rect x="11.0" y="63.2" width="11" height="8.8" fill="#3c4444" opacity="1"/><rect x="22.0" y="63.2" width="13" height="8.8" fill="#1c2826" opacity="1"/><rect x="35.0" y="63.2" width="23" height="8.8" fill="#54585c" opacity="1"/><rect x="58.0" y="63.2" width="8" height="8.8" fill="#8a5a5a" opacity="1"/><rect x="66.0" y="63.2" width="27" height="8.8" fill="#b87474" opacity="1"/><rect x="93.0" y="63.2" width="14" height="8.8" fill="#c87c74" opacity="1"/><rect x="107.0" y="63.2" width="29.5" height="8.8" fill="#dc5c5c" opacity="1"/><rect x="12.0" y="63.2" width="1" height="8.8" fill="#000" opacity="0.25"/><rect x="13.0" y="63.2" width="1" height="8.8" fill="#000" opacity="0.25"/><rect x="16.0" y="63.2" width="1" height="8.8" fill="#000" opacity="0.25"/><rect x="20.0" y="63.2" width="1" height="8.8" fill="#000" opacity="0.25"/><rect x="21.0" y="63.2" width="1" height="8.8" fill="#000" opacity="0.25"/><rect x="22.0" y="63.2" width="1" height="8.8" fill="#000" opacity="0.25"/><rect x="24.0" y="63.2" width="1" height="8.8" fill="#000" opacity="0.25"/><rect x="25.0" y="63.2" width="1" height="8.8" fill="#000" opacity="0.25"/><rect x="29.0" y="63.2" width="1" height="8.8" fill="#000" opacity="0.25"/><rect x="30.0" y="63.2" width="1" height="8.8" fill="#000" opacity="0.25"/><rect x="34.0" y="63.2" width="1" height="8.8" fill="#000" opacity="0.25"/><rect x="35.0" y="63.2" width="1" height="8.8" fill="#000" opacity="0.25"/><rect x="38.0" y="63.2" width="1" height="8.8" fill="#000" opacity="0.25"/><rect x="42.0" y="63.2" width="1" height="8.8" fill="#000" opacity="0.25"/><rect x="44.0" y="63.2" width="1" height="8.8" fill="#000" opacity="0.25"/><rect x="47.0" y="63.2" width="1" height="8.8" fill="#000" opacity="0.25"/><rect x="50.0" y="63.2" width="1" height="8.8" fill="#000" opacity="0.25"/><rect x="51.0" y="63.2" width="1" height="8.8" fill="#000" opacity="0.25"/><rect x="53.0" y="63.2" width="1" height="8.8" fill="#000" opacity="0.25"/><rect x="54.0" y="63.2" width="1" height="8.8" fill="#000" opacity="0.25"/><rect x="55.0" y="63.2" width="1" height="8.8" fill="#000" opacity="0.25"/><rect x="56.0" y="63.2" width="1" height="8.8" fill="#000" opacity="0.25"/><rect x="57.0" y="63.2" width="1" height="8.8" fill="#a02828" opacity="0.25"/><rect x="58.0" y="63.2" width="1" height="8.8" fill="#a02828" opacity="0.25"/><rect x="59.0" y="63.2" width="1" height="8.8" fill="#a02828" opacity="0.25"/><rect x="61.0" y="63.2" width="1" height="8.8" fill="#a02828" opacity="0.25"/><rect x="63.0" y="63.2" width="1" height="8.8" fill="#a02828" opacity="0.25"/><rect x="64.0" y="63.2" width="1" height="8.8" fill="#a02828" opacity="0.25"/><rect x="65.0" y="63.2" width="1" height="8.8" fill="#a02828" opacity="0.25"/><rect x="66.0" y="63.2" width="1" height="8.8" fill="#a02828" opacity="0.25"/><rect x="67.0" y="63.2" width="1" height="8.8" fill="#a02828" opacity="0.25"/><rect x="70.0" y="63.2" width="1" height="8.8" fill="#a02828" opacity="0.25"/><rect x="73.0" y="63.2" width="1" height="8.8" fill="#a02828" opacity="0.25"/><rect x="78.0" y="63.2" width="1" height="8.8" fill="#a02828" opacity="0.25"/><rect x="82.0" y="63.2" width="1" height="8.8" fill="#a02828" opacity="0.25"/><rect x="87.0" y="63.2" width="1" height="8.8" fill="#a02828" opacity="0.25"/><rect x="88.0" y="63.2" width="1" height="8.8" fill="#a02828" opacity="0.25"/><rect x="89.0" y="63.2" width="1" height="8.8" fill="#a02828" opacity="0.25"/><rect x="90.0" y="63.2" width="1" height="8.8" fill="#a02828" opacity="0.25"/><rect x="92.0" y="63.2" width="1" height="8.8" fill="#a02828" opacity="0.25"/><rect x="93.0" y="63.2" width="1" height="8.8" fill="#a02828" opacity="0.25"/><rect x="94.0" y="63.2" width="1" height="8.8" fill="#a02828" opacity="0.25"/><rect x="98.0" y="63.2" width="1" height="8.8" fill="#a02828" opacity="0.25"/><rect x="99.0" y="63.2" width="1" height="8.8" fill="#a02828" opacity="0.25"/><rect x="100.0" y="63.2" width="1" height="8.8" fill="#a02828" opacity="0.25"/><rect x="102.0" y="63.2" width="1" height="8.8" fill="#a02828" opacity="0.25"/><rect x="104.0" y="63.2" width="1" height="8.8" fill="#a02828" opacity="0.25"/><rect x="108.0" y="63.2" width="1" height="8.8" fill="#a02828" opacity="0.25"/><rect x="110.0" y="63.2" width="1" height="8.8" fill="#a02828" opacity="0.25"/><rect x="111.0" y="63.2" width="1" height="8.8" fill="#a02828" opacity="0.25"/><rect x="112.0" y="63.2" width="1" height="8.8" fill="#a02828" opacity="0.25"/><rect x="113.0" y="63.2" width="1" height="8.8" fill="#a02828" opacity="0.25"/><rect x="116.0" y="63.2" width="1" height="8.8" fill="#a02828" opacity="0.25"/><rect x="118.0" y="63.2" width="1" height="8.8" fill="#a02828" opacity="0.25"/><rect x="119.0" y="63.2" width="1" height="8.8" fill="#a02828" opacity="0.25"/><rect x="120.0" y="63.2" width="1" height="8.8" fill="#a02828" opacity="0.25"/><rect x="121.0" y="63.2" width="1" height="8.8" fill="#a02828" opacity="0.25"/><rect x="122.0" y="63.2" width="1" height="8.8" fill="#a02828" opacity="0.25"/><rect x="123.0" y="63.2" width="1" height="8.8" fill="#a02828" opacity="0.25"/><rect x="124.0" y="63.2" width="1" height="8.8" fill="#a02828" opacity="0.25"/><rect x="125.0" y="63.2" width="1" height="8.8" fill="#a02828" opacity="0.25"/><rect x="132.0" y="63.2" width="1" height="8.8" fill="#a02828" opacity="0.25"/><rect x="133.0" y="63.2" width="1" height="8.8" fill="#a02828" opacity="0.25"/><rect x="135.0" y="63.2" width="1" height="8.8" fill="#a02828" opacity="0.25"/><rect x="96.0" y="59.1" width="1" height="12.9" fill="#d09030" opacity="0.9"/><rect x="98.0" y="59.1" width="1" height="12.9" fill="#d09030" opacity="0.9"/><rect x="104.0" y="59.1" width="1" height="12.9" fill="#d09030" opacity="0.9"/><rect x="106.0" y="59.1" width="1" height="12.9" fill="#d09030" opacity="0.9"/><rect x="110.0" y="59.1" width="1" height="12.9" fill="#d09030" opacity="0.9"/><rect x="114.0" y="59.1" width="1" height="12.9" fill="#d09030" opacity="0.9"/><rect x="118.0" y="59.1" width="1" height="12.9" fill="#d09030" opacity="0.9"/><rect x="122.0" y="59.1" width="1" height="12.9" fill="#d09030" opacity="0.9"/><rect x="125.0" y="59.1" width="1" height="12.9" fill="#d09030" opacity="0.9"/><path d="M0.5 73 L0.5 0.5 L138 0.5" fill="none" stroke="#444" stroke-width="1"/><path d="M137.5 0.5 L137.5 72.5 L0.5 72.5" fill="none" stroke="#333" stroke-width="1"/></svg>
<svg class="a" style="left:437px;top:72px" width="6" height="7" viewBox="0 0 6 7"><path d="M1 0.5 L5.5 3.5 L1 6.5 Z" fill="#111"/></svg>
<svg class="a" style="left:441.5px;top:150.5px" width="7" height="6" viewBox="0 0 7 6"><path d="M3.5 0.5 L6.5 5.5 L0.5 5.5 Z" fill="#111"/></svg>
<svg class="a" style="left:577.5px;top:150.5px" width="7" height="6" viewBox="0 0 7 6"><path d="M3.5 0.5 L6.5 5.5 L0.5 5.5 Z" fill="#111"/></svg>
<div class="btn" style="left:403.5px;top:176.5px;width:36.0px;height:13.0px;line-height:11.0px;border-color:#333;box-shadow:inset 0 0 0 1px #fdfdfa, inset 0 0 0 2px #8c8a80;"><span class="s">Close</span></div>
<div class="btn" style="left:446px;top:176.5px;width:37px;height:13.0px;line-height:11.0px;"><span class="s">Print</span></div>
<div class="btn" style="left:489px;top:176.5px;width:38px;height:13.0px;line-height:11.0px;"><span class="s">Save</span></div>
<div class="btn" style="left:532px;top:176.5px;width:37.5px;height:13.0px;line-height:11.0px;"><span class="s">Help</span></div>
<div class="a" style="left:575.5px;top:176px;width:15px;height:14px;box-sizing:border-box;border:1px solid #fff;border-right-color:#555;border-bottom-color:#555;background:#e9e8d9"></div>
<svg class="a" style="left:578.5px;top:178.5px" width="9" height="9" viewBox="0 0 9 9"><path d="M1 4 L1 1.2 L4 1.2 L4 3.5" fill="none" stroke="#111" stroke-width="1"/><rect x="2.8" y="3.5" width="5.4" height="4.8" fill="#111"/><rect x="4.6" y="5" width="1.8" height="1.8" fill="#ddd"/></svg>
</body></html>
